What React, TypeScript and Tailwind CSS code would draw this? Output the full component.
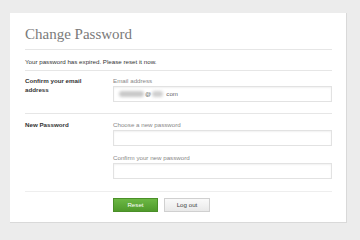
import React from "react";

function Rule({ className = "" }: { className?: string }) {
  return <div className={"h-px bg-[#e6e6e6] w-[307px] " + className} />;
}

function Input({ children }: { children?: React.ReactNode }) {
  return (
    <div className="w-[219px] h-[16px] border border-[#e2e2e2] bg-white shadow-[inset_0_1px_2px_rgba(0,0,0,0.06)] flex items-center">
      {children}
    </div>
  );
}

export default function App() {
  return (
    <div
      className="w-[360px] h-[240px] bg-[#ececec] pt-[13px] pl-[10px] overflow-hidden"
      style={{ fontFamily: '"Liberation Sans", Arial, sans-serif' }}
    >
      <div className="w-[337px] h-[210px] bg-white border-r border-b border-[#d9d9d9] pl-[15px] pt-[11px]">
        <div
          className="text-[15px] leading-[20px] text-[#7a7a7a] h-[20px]"
          style={{ fontFamily: '"Liberation Serif", "Times New Roman", serif' }}
        >
          Change Password
        </div>
        <Rule className="mt-[5px] bg-[#dcdcdc]" />
        <div className="mt-[8px] h-[8px] text-[6.2px] leading-[8px] text-[#333]">
          Your password has expired. Please reset it now.
        </div>
        <Rule className="mt-[4px]" />
        <div className="flex mt-[5px] h-[30px]">
          <div className="w-[88px] text-[6.2px] leading-[9px] font-bold text-[#333]">
            Confirm your email
            <br />
            address
          </div>
          <div className="flex flex-col">
            <div className="text-[6.2px] leading-[9px] text-[#888] h-[9px]">Email address</div>
            <div className="mt-[1px]">
              <Input>
                <div className="ml-[5px] w-[25px] h-[6px] bg-[#c8c8c8] blur-[1.5px] rounded" />
                <span className="text-[6.2px] text-[#666] ml-[1px]">@</span>
                <div className="ml-[1px] w-[11px] h-[6px] bg-[#cfcfcf] blur-[1.5px] rounded" />
                <span className="text-[6.2px] text-[#666] ml-[3px]">com</span>
              </Input>
            </div>
          </div>
        </div>
        <Rule className="mt-[7px]" />
        <div className="flex mt-[6px]">
          <div className="w-[88px] text-[6.2px] leading-[9px] font-bold text-[#333]">New Password</div>
          <div className="flex flex-col">
            <div className="text-[6.2px] leading-[9px] text-[#888] h-[9px]">Choose a new password</div>
            <div className="mt-[1px]">
              <Input />
            </div>
            <div className="mt-[7px] text-[6.2px] leading-[9px] text-[#888] h-[9px]">Confirm your new password</div>
            <div className="mt-[1px]">
              <Input />
            </div>
          </div>
        </div>
        <Rule className="mt-[12px] bg-[#eeeeee]" />
        <div className="flex mt-[6px] pl-[88px] gap-[6px]">
          <div className="w-[45px] h-[14px] bg-gradient-to-b from-[#6cb844] to-[#4f9a2b] border border-[#4a8f28] flex items-center justify-center text-white text-[6.2px]">
            Reset
          </div>
          <div className="w-[46px] h-[14px] bg-gradient-to-b from-[#fafafa] to-[#e9e9e9] border border-[#d0d0d0] flex items-center justify-center text-[#444] text-[6.2px]">
            Log out
          </div>
        </div>
      </div>
    </div>
  );
}
